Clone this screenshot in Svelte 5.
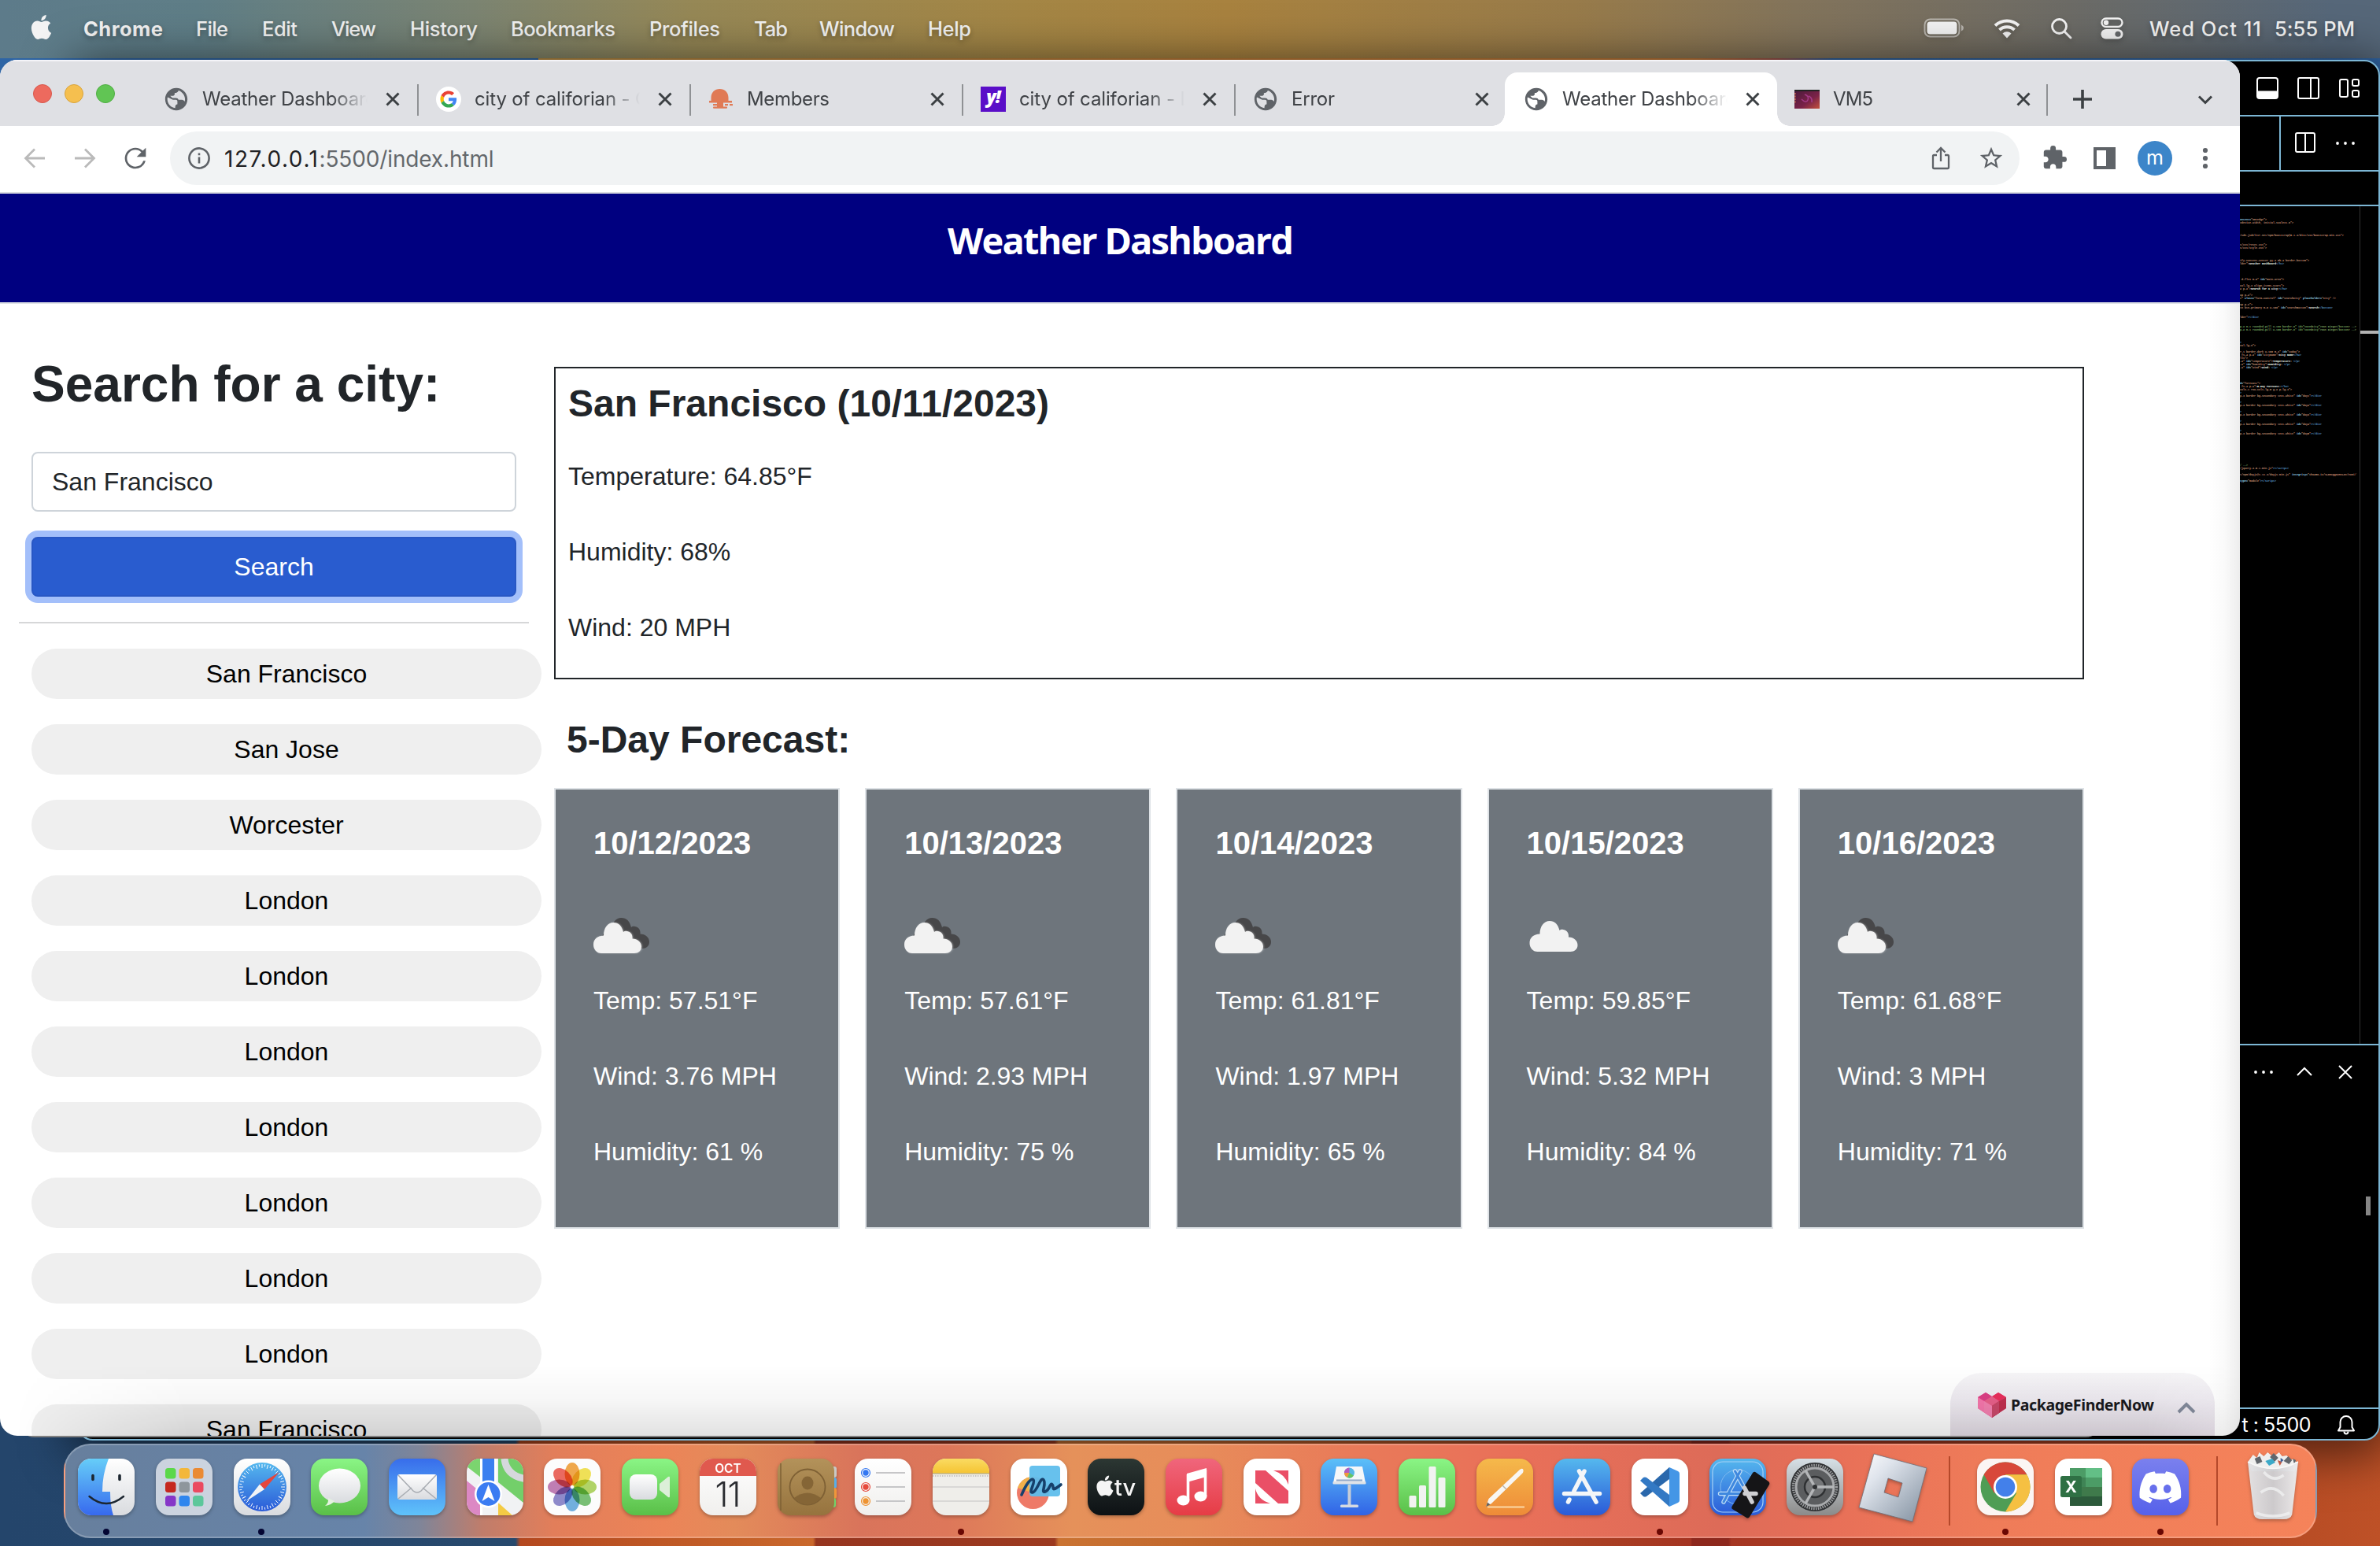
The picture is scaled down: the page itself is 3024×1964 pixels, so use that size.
<script>
  // Spreads letter spacing so that a label takes a given width in pixels.
  function fit(node, width) {
    const natural = node.getBoundingClientRect().width;
    const count = Math.max(1, node.textContent.length - 1);
    node.style.letterSpacing = `${(width - natural) / count}px`;
  }

  const menu = [
    ['Chrome', 143, 101], ['File', 84, 41], ['Edit', 88, 45], ['View', 100, 57], ['History', 128, 86],
    ['Bookmarks', 176, 133], ['Profiles', 133, 90], ['Tab', 83, 43], ['Window', 138, 96], ['Help', 80, 55]
  ];

  const tabs = [
    { icon: 'globe', title: 'Weather Dashboard', width: 222 },
    { icon: 'google', title: 'city of califorian - G', width: 222 },
    { icon: 'members', title: 'Members', width: 105 },
    { icon: 'yahoo', title: 'city of califorian - L', width: 218 },
    { icon: 'globe', title: 'Error', width: 55, last: true },
    { icon: 'globe', title: 'Weather Dashboard', width: 222, active: true },
    { icon: 'vm', title: 'VM5', width: 51, narrow: true }
  ];

  const cities = ['San Francisco', 'San Jose', 'Worcester', 'London', 'London', 'London', 'London', 'London', 'London', 'London', 'San Francisco'];

  const days = [
    { date: '10/12/2023', broken: true, temp: '57.51', wind: '3.76', humidity: 61 },
    { date: '10/13/2023', broken: true, temp: '57.61', wind: '2.93', humidity: 75 },
    { date: '10/14/2023', broken: true, temp: '61.81', wind: '1.97', humidity: 65 },
    { date: '10/15/2023', broken: false, temp: '59.85', wind: '5.32', humidity: 84 },
    { date: '10/16/2023', broken: true, temp: '61.68', wind: '3', humidity: 71 }
  ];

  // Minimap rows: line number -> [token kind, text] pairs.
  const dayRow = (n) => [['s', 'p-3 border bg-secondary text-white"'], ['a', ' id='], ['s', `"day${n}"`], ['g', '></div>']];
  const saved = [['c', 'p-2 m-1 rounded-pill w-100 border-0" id="savedCity">San Diego</button> -->']];
  const rows = {
    0: [['a', 'ontent='], ['s', '"IE=edge">']],
    1: [['s', '=device-width, initial-scale=1.0">']],
    5: [['s', '/cdn.jsdelivr.net/npm/bootstrap@5.1.3/dist/css/bootstrap.min.css">']],
    8: [['s', 's/css/reset.css">']],
    9: [['s', 's/css/style.css">']],
    13: [['s', 'ify-content-center py-3 mb-4 border-bottom">']],
    14: [['s', 'lder">'], ['t', 'Weather Dashboard'], ['g', '</h1>']],
    19: [['s', ' d-flex m-0"'], ['a', ' id='], ['s', '"main-area">']],
    21: [['s', 'col-lg-3 align-items-start">']],
    22: [['s', '2 p-2">'], ['t', 'Search for a city:'], ['g', '</h2>']],
    24: [['s', 'up p-2">']],
    25: [['s', 't"'], ['a', ' class='], ['s', '"form-control"'], ['a', ' id='], ['s', '"searchCity"'], ['a', ' placeholder='], ['s', '"City" />']],
    27: [['s', 'up p-2">']],
    28: [['s', 'tn btn-primary m-0 w-100"'], ['a', ' id='], ['s', '"searchButton">'], ['t', 'Search'], ['g', '</button>']],
    31: [['s', 'lder"'], ['g', '></div>']],
    34: saved,
    35: saved,
    39: [['g', '>']],
    40: [['s', 'col-lg-9">']],
    42: [['s', 'r-1 border-dark w-100 m-3"'], ['a', ' id='], ['s', '"today">']],
    43: [['s', ' fs-4 p-2"'], ['a', ' id='], ['s', '"cityName">'], ['t', 'City Name'], ['g', '</h2>']],
    44: [['s', 'lls">']],
    45: [['s', '-2"'], ['a', ' id='], ['s', '"temperature">'], ['t', 'Temperature: '], ['g', '</p>']],
    46: [['s', '-2"'], ['a', ' id='], ['s', '"humidity">'], ['t', 'Humidity: '], ['g', '</p>']],
    47: [['s', '-2"'], ['a', ' id='], ['s', '"wind">'], ['t', 'Wind: '], ['g', '</p>']],
    52: [['a', 'd='], ['s', '"forecast">']],
    53: [['s', ' fs-4 p-2">'], ['t', '5-Day Forecast:'], ['g', '</h2>']],
    54: [['s', 'cols-1 row-cols-lg-5 g-2 p-lg-3">']],
    55: [['g', '>']],
    56: dayRow(1), 58: [['g', '>']],
    59: dayRow(2), 61: [['g', '>']],
    62: dayRow(3), 64: [['g', '>']],
    65: dayRow(4), 67: [['g', '>']],
    68: dayRow(5),
    78: [['c', '/ -->']],
    79: [['s', '/jquery-3.5.1.min.js"'], ['g', '><\/script>']],
    81: [['s', 't/npm/dayjs@1.11.3/dayjs.min.js"'], ['a', ' integrity='], ['s', '"sha256-iu/sLO8cQgI2HXLZX/eo8i/']],
    83: [['a', 'type='], ['s', '"module"'], ['g', '><\/script>']]
  };
  const code = Array.from({ length: 84 }, (_, i) => rows[i] ?? []);

  const launch = ['#5bd84a', '#f3b73a', '#ea8a34', '#c5281f', '#8e969c', '#ea4a60', '#8636c8', '#2f86ee', '#5cc79b'];
  const petals = ['#f09a2e', '#f0de3a', '#a4cf4c', '#63b75e', '#5aa3dc', '#7d78c4', '#b768a8', '#ea5145'];
  const ticks = Array.from({ length: 48 }, (_, i) => i * 7.5);
</script>

{#snippet cloud(x, y)}
  <path
    transform="translate({x} {y})"
    d="M10 39C4 39 0 34 0 28C0 21 5 17 13 16.500C13 7 18 0 25.500 0C32 0 36 4 38 12C39.500 10.500 41 10.500 43 11C48 12 50 16 49.500 20.500C56 20.500 61 25 61 30.500C61 36 57 39 52 39Z"
  />
{/snippet}

{#snippet x(size)}
  <svg class="close" width={size} height={size} viewBox="0 0 20 20"><path d="M2.500 2.500L17.500 17.500M17.500 2.500L2.500 17.500" /></svg>
{/snippet}

<svg class="defs" width="0" height="0">
  <defs>
    <linearGradient id="finder" x2="0" y2="1"><stop stop-color="#66cdf8" /><stop offset="1" stop-color="#3769ee" /></linearGradient>
    <linearGradient id="white" x2="0" y2="1"><stop stop-color="#fff" /><stop offset="1" stop-color="#d9dbdf" /></linearGradient>
    <linearGradient id="paper" x2="0" y2="1"><stop stop-color="#fff" /><stop offset="1" stop-color="#f0efed" /></linearGradient>
    <linearGradient id="green" x2="0" y2="1"><stop stop-color="#8af585" /><stop offset="1" stop-color="#5abf48" /></linearGradient>
    <linearGradient id="mail" x2="0" y2="1"><stop stop-color="#386deb" /><stop offset="1" stop-color="#5fc3fa" /></linearGradient>
    <linearGradient id="blue" x2="0" y2="1"><stop stop-color="#5bc0f8" /><stop offset="1" stop-color="#3163e6" /></linearGradient>
    <linearGradient id="store" x2="0" y2="1"><stop stop-color="#55b8ee" /><stop offset="1" stop-color="#2a5ad8" /></linearGradient>
    <linearGradient id="red" x2="0" y2="1"><stop stop-color="#f0667c" /><stop offset="1" stop-color="#e63c45" /></linearGradient>
    <linearGradient id="orange" x2="0" y2="1"><stop stop-color="#f5b94b" /><stop offset="1" stop-color="#ee8b38" /></linearGradient>
    <linearGradient id="yellow" x2="0" y2="1"><stop stop-color="#fadb62" /><stop offset="1" stop-color="#f5c433" /></linearGradient>
    <linearGradient id="dark" x2="0" y2="1"><stop stop-color="#2c3733" /><stop offset="1" stop-color="#0d1114" /></linearGradient>
    <linearGradient id="brown" x2="0" y2="1"><stop stop-color="#b3925a" /><stop offset="1" stop-color="#96733e" /></linearGradient>
    <linearGradient id="gear" x2="0" y2="1"><stop stop-color="#d6e0e6" /><stop offset="1" stop-color="#8b8b8a" /></linearGradient>
    <linearGradient id="steel" x2="1" y2="1"><stop stop-color="#fff" /><stop offset=".3" stop-color="#dfe4ec" /><stop offset="1" stop-color="#7e8d9d" /></linearGradient>
    <linearGradient id="discord" x2="0" y2="1"><stop stop-color="#7a80ee" /><stop offset="1" stop-color="#5661ea" /></linearGradient>
    <linearGradient id="bin" x2="1" y2="0"><stop stop-color="#e4e4e6" /><stop offset=".5" stop-color="#cdcdd0" /><stop offset="1" stop-color="#ececee" /></linearGradient>
    <linearGradient id="vm" x2="1" y2="1"><stop stop-color="#4a1a3c" /><stop offset=".6" stop-color="#7a2248" /><stop offset="1" stop-color="#c4503c" /></linearGradient>
    <clipPath id="tile"><rect width="72" height="72" rx="17" /></clipPath>
  </defs>
</svg>

<div class="screen">
  <header class="menubar">
    <svg class="apple" width="31" height="31" viewBox="0 0 24 24"><path fill="#f4f4f4" d="M12.152 6.896c-.948 0-2.415-1.078-3.960-1.040-2.040.027-3.910 1.183-4.961 3.014-2.117 3.675-.546 9.103 1.519 12.090 1.013 1.454 2.208 3.090 3.792 3.039 1.520-.065 2.090-.987 3.935-.987 1.831 0 2.350.987 3.960.948 1.637-.026 2.676-1.480 3.676-2.948 1.156-1.688 1.636-3.325 1.662-3.415-.039-.013-3.182-1.221-3.220-4.857-.026-3.040 2.480-4.494 2.597-4.559-1.429-2.090-3.623-2.324-4.390-2.376-2-.156-3.675 1.090-4.610 1.090zM15.530 3.830c.843-1.012 1.400-2.427 1.245-3.830-1.207.052-2.662.805-3.532 1.818-.780.896-1.454 2.338-1.273 3.714 1.338.104 2.715-.688 3.559-1.701" /></svg>
    <nav>
      {#each menu as [label, slot, width], i}
        <div class="item" class:bold={i === 0} style:width="{slot}px"><span use:fit={width}>{label}</span></div>
      {/each}
    </nav>
    <div class="status">
      <svg width="52" height="26" viewBox="0 0 52 26"><rect x="1.500" y="1.500" width="44" height="22" rx="7" fill="none" stroke="#fff" stroke-opacity=".5" stroke-width="2" /><rect x="4.500" y="4.500" width="38" height="16" rx="4" fill="#f4f4f4" /><path d="M48 8.500q3 1.500 3 4t-3 4z" fill="#fff" fill-opacity=".5" /></svg>
      <svg width="34" height="26" viewBox="0 0 34 26"><g fill="none" stroke="#f4f4f4" stroke-width="4"><path d="M2 9.500a21.500 21.500 0 0 1 30 0" /><path d="M7.500 15a13.600 13.600 0 0 1 19 0" /></g><path d="M11.500 19.500a8 8 0 0 1 11 0L17 25.500z" fill="#f4f4f4" /></svg>
      <svg width="28" height="28" viewBox="0 0 28 28"><g fill="none" stroke="#f4f4f4" stroke-width="2.800" stroke-linecap="round"><circle cx="11.500" cy="11.500" r="9" /><path d="M18 18l8 8" /></g></svg>
      <svg width="30" height="28" viewBox="0 0 30 28"><rect x="1.500" y="1.500" width="26" height="10.500" rx="5.250" fill="none" stroke="#f4f4f4" stroke-width="2.400" /><circle cx="7" cy="6.750" r="3.200" fill="#f4f4f4" /><rect x=".5" y="15" width="28" height="12.500" rx="6.250" fill="#f4f4f4" /><circle cx="22" cy="21.250" r="3.600" fill="#66696b" /></svg>
      <span class="day" use:fit={142}>Wed Oct 11</span>
      <span use:fit={102}>5:55 PM</span>
    </div>
  </header>

  <!-- editor window behind the browser -->
  <section class="editor">
    <div class="ed-title">
      <svg width="30" height="30" viewBox="0 0 30 30"><rect x="2" y="2" width="26" height="26" rx="3" fill="none" stroke="#fff" stroke-width="2" /><path d="M2 18.500h26V27l-1 1H3l-1-1z" fill="#fff" /></svg>
      <svg width="30" height="30" viewBox="0 0 30 30"><rect x="2" y="2" width="26" height="26" rx="2" fill="none" stroke="#fff" stroke-width="2" /><path d="M18 2v26" stroke="#fff" stroke-width="2" /></svg>
      <svg width="30" height="30" viewBox="0 0 30 30"><g fill="none" stroke="#fff" stroke-width="2"><rect x="3" y="4" width="10" height="22" rx="2" /><rect x="19" y="4" width="8" height="8" rx="2" /><rect x="19" y="18" width="8" height="8" rx="2" /></g></svg>
    </div>
    <div class="ed-tabs">
      <svg width="28" height="28" viewBox="0 0 28 28"><rect x="2" y="2" width="24" height="24" rx="2" fill="none" stroke="#fff" stroke-width="2" /><path d="M14 2v24" stroke="#fff" stroke-width="2" /></svg>
      <svg width="26" height="28" viewBox="0 0 26 28"><g fill="#fff"><circle cx="3" cy="15" r="1.900" /><circle cx="13" cy="15" r="1.900" /><circle cx="23" cy="15" r="1.900" /></g></svg>
    </div>
    <div class="ed-crumbs"></div>
    <div class="ed-body">
      <div class="minimap">
        {#each code as line}
          <div class="row">{#each line as [kind, text]}<span class={kind}>{text}</span>{/each}</div>
        {/each}
      </div>
      <div class="ruler"><div class="mark"></div></div>
    </div>
    <div class="ed-panel">
      <div class="panel-icons">
        <svg width="26" height="26" viewBox="0 0 26 26"><g fill="#fff"><circle cx="3" cy="13" r="1.900" /><circle cx="13" cy="13" r="1.900" /><circle cx="23" cy="13" r="1.900" /></g></svg>
        <svg width="26" height="26" viewBox="0 0 26 26"><path d="M4 17l9-9 9 9" fill="none" stroke="#fff" stroke-width="2" /></svg>
        <svg width="26" height="26" viewBox="0 0 26 26"><path d="M5 5l16 16M21 5L5 21" stroke="#fff" stroke-width="2" /></svg>
      </div>
      <div class="thumb"></div>
    </div>
    <div class="ed-status">
      <span use:fit={88}>t : 5500</span>
      <svg width="26" height="28" viewBox="0 0 26 28"><path d="M3 21.500L5.500 17v-6.500a7.500 7.500 0 0 1 15 0V17l2.500 4.500z" fill="none" stroke="#fff" stroke-width="2" stroke-linejoin="round" /><path d="M10.500 22.500q0 3 2.500 3t2.500-3" fill="none" stroke="#fff" stroke-width="2" /></svg>
    </div>
  </section>
  <div class="backdrop"></div>

  <!-- browser window -->
  <section class="browser">
    <div class="strip">
      <div class="lights"><i class="stop"></i><i class="hide"></i><i class="zoom"></i></div>
      {#each tabs as tab}
        <div class="tab" class:active={tab.active} class:last={tab.last} class:narrow={tab.narrow}>
          <div class="fav">
            {#if tab.icon === 'globe'}
              <svg width="34" height="34" viewBox="0 0 24 24"><path fill="#5f6368" d="M12 2C6.480 2 2 6.480 2 12s4.480 10 10 10 10-4.480 10-10S17.520 2 12 2zm-1 17.930c-3.950-.49-7-3.850-7-7.930 0-.62.08-1.210.21-1.790L9 12.500h2.500c1.500 0 1.500 1 1.500 2v2c-1 0-2 .5-2 3.430zM14 12.500c-.55-1-1-1.500-2.500-1.500H8.500l-2-2h2c1 0 2-.5 2-1.500V6.500c1.500 0 3-.5 3.500-2.300 3 .9 5.800 4 5.800 7.800 0 .8-.1 1.500-.3 2.200-.5-.9-1.200-1.700-2.500-1.700z" /></svg>
            {:else if tab.icon === 'google'}
              <svg width="32" height="32" viewBox="-16 -16 80 80"><circle cx="24" cy="24" r="40" fill="#fff" /><g transform="translate(-2.400 -2.400) scale(1.100)"><path fill="#EA4335" d="M24 9.500c3.540 0 6.710 1.220 9.210 3.600l6.850-6.850C35.900 2.380 30.470 0 24 0 14.620 0 6.510 5.380 2.560 13.220l7.980 6.190C12.430 13.720 17.740 9.500 24 9.500z" /><path fill="#4285F4" d="M46.980 24.550c0-1.570-.15-3.090-.38-4.550H24v9.020h12.940c-.58 2.960-2.260 5.480-4.780 7.180l7.730 6c4.510-4.180 7.090-10.360 7.090-17.650z" /><path fill="#FBBC05" d="M10.530 28.590c-.48-1.450-.76-2.990-.76-4.590s.27-3.140.76-4.590l-7.980-6.190C.92 16.460 0 20.120 0 24c0 3.880.92 7.540 2.560 10.780l7.970-6.190z" /><path fill="#34A853" d="M24 48c6.480 0 11.930-2.130 15.890-5.810l-7.730-6c-2.150 1.450-4.920 2.300-8.160 2.300-6.260 0-11.570-4.220-13.470-9.910l-7.980 6.190C6.510 42.620 14.620 48 24 48z" /></g></svg>
            {:else if tab.icon === 'members'}
              <svg width="32" height="32" viewBox="0 0 32 32"><g fill="#e07a55"><path d="M3.500 18V14C3.500 7.500 8 3 14.500 3S25.500 7.500 25.500 14v4H30v2H1v-2z" /><rect x="1" y="18" width="29" height="2.500" /><rect x="11" y="20" width="8" height="7" /><rect x="6" y="22" width="11" height="2.200" /><rect x="21" y="22" width="4" height="2.200" /><rect x="27" y="22" width="4" height="2.200" /><rect x="6" y="25.500" width="18" height="2.300" rx="1" /></g></svg>
            {:else if tab.icon === 'yahoo'}
              <div class="yahoo">y!</div>
            {:else}
              <svg width="32" height="24" viewBox="0 0 32 24"><rect width="32" height="24" fill="url(#vm)" /><path d="M0 1h32" stroke="#222" stroke-width="2" /><path d="M13 6q6 2 4 7t-8-1M18 8q5 2 4 8" fill="none" stroke="#a33a86" stroke-width="1.600" /><path d="M1 4v13" stroke="#c96a4a" stroke-width="1.400" stroke-dasharray="2 1.500" /></svg>
            {/if}
          </div>
          <div class="title"><span use:fit={tab.width}>{tab.title}</span></div>
          {@render x(20)}
        </div>
      {/each}
      <svg class="plus" width="28" height="28" viewBox="0 0 28 28"><path d="M14 2v24M2 14h24" stroke="#3c4043" stroke-width="3.600" /></svg>
      <svg class="down" width="20" height="14" viewBox="0 0 20 14"><path d="M2 2.500l8 8 8-8" fill="none" stroke="#3c4043" stroke-width="3" /></svg>
    </div>

    <div class="toolbar">
      <svg width="32" height="32" viewBox="0 0 32 32"><path d="M29 16H5M16 4.500L4.500 16 16 27.500" fill="none" stroke="#bababa" stroke-width="2.800" /></svg>
      <svg width="32" height="32" viewBox="0 0 32 32"><path d="M3 16h24M16 4.500L27.500 16 16 27.500" fill="none" stroke="#bababa" stroke-width="2.800" /></svg>
      <svg width="40" height="40" viewBox="0 0 24 24" class="reload"><path fill="#5f6368" d="M17.650 6.350A7.958 7.958 0 0 0 12 4a8 8 0 1 0 7.730 10h-1.650A6.400 6.400 0 0 1 12 18.400c-3.530 0-6.400-2.870-6.400-6.400s2.870-6.400 6.400-6.400c1.800 0 3.400.75 4.500 1.900L13 11h7V4z" /></svg>
      <div class="omnibox">
        <svg width="30" height="30" viewBox="0 0 30 30"><circle cx="15" cy="15" r="12.600" fill="none" stroke="#5f6368" stroke-width="2.600" /><path d="M15 13.500v8M15 8.500v2.800" stroke="#5f6368" stroke-width="2.600" /></svg>
        <div class="url"><span use:fit={119}>127.0.0.1</span><span class="dim" use:fit={222}>:5500/index.html</span></div>
        <svg width="32" height="32" viewBox="0 0 32 32"><path d="M11 12H7.500a1.500 1.500 0 0 0-1.500 1.500v14A1.500 1.500 0 0 0 7.500 29h17a1.500 1.500 0 0 0 1.500-1.500v-14a1.500 1.500 0 0 0-1.500-1.500H21M16 20V4M10.500 8.500L16 3l5.500 5.500" fill="none" stroke="#5f6368" stroke-width="2.300" /></svg>
        <svg width="34" height="34" viewBox="0 0 24 24"><path fill="#5f6368" d="M22 9.240l-7.190-.62L12 2 9.190 8.630 2 9.240l5.460 4.730L5.820 21 12 17.270 18.180 21l-1.630-7.030L22 9.240zM12 15.400l-3.760 2.270 1-4.280-3.320-2.880 4.380-.38L12 6.100l1.710 4.040 4.380.38-3.320 2.880 1 4.280L12 15.400z" /></svg>
      </div>
      <svg width="32" height="32" viewBox="0 1 23 23"><path fill="#5f6368" d="M20.500 11H19V7c0-1.100-.9-2-2-2h-4V3.500a2.500 2.500 0 0 0-5 0V5H4c-1.100 0-1.990.9-1.990 2v3.800H3.500c1.490 0 2.700 1.210 2.700 2.700s-1.210 2.700-2.700 2.700H2V20c0 1.100.9 2 2 2h3.800v-1.500c0-1.490 1.210-2.700 2.700-2.700 1.490 0 2.700 1.210 2.700 2.700V22H17c1.100 0 2-.9 2-2v-4h1.500a2.500 2.500 0 0 0 0-5z" /></svg>
      <svg width="32" height="32" viewBox="0 0 32 32"><path fill="#5f6368" fill-rule="evenodd" d="M2 2h28v28H2zM6 6v20h12V6z" /></svg>
      <div class="avatar">m</div>
      <svg width="32" height="32" viewBox="0 0 32 32"><g fill="#5f6368"><circle cx="16" cy="6" r="3.100" /><circle cx="16" cy="16" r="3.100" /><circle cx="16" cy="26" r="3.100" /></g></svg>
    </div>

    <div class="banner"><h1 use:fit={440}>Weather Dashboard</h1></div>

    <div class="page">
      <aside>
        <h2>Search for a city:</h2>
        <div class="input">San Francisco</div>
        <div class="button">Search</div>
        <div class="rule"></div>
        <div class="cities">
          {#each cities as city}<div class="pill">{city}</div>{/each}
        </div>
      </aside>
      <main>
        <div class="today">
          <h3>San Francisco (10/11/2023)</h3>
          <p>Temperature: 64.85°F</p>
          <p>Humidity: 68%</p>
          <p>Wind: 20 MPH</p>
        </div>
        <h3 class="heading">5-Day Forecast:</h3>
        <div class="cards">
          {#each days as day}
            <article>
              <h4>{day.date}</h4>
              <svg class="sky" width="100" height="152" viewBox="0 0 100 152">
                {#if day.broken}
                  <g fill="#474749">{@render cloud(10, 71)}</g>
                  <g class="front" fill="#f2f2f2">{@render cloud(0, 77)}</g>
                {:else}
                  <g fill="#f2f2f2">{@render cloud(3.500, 75)}</g>
                {/if}
              </svg>
              <p>Temp: {day.temp}°F</p>
              <p>Wind: {day.wind} MPH</p>
              <p>Humidity: {day.humidity} %</p>
            </article>
          {/each}
        </div>
      </main>
    </div>

    <div class="finder-tab">
      <svg width="38" height="32" viewBox="0 0 38 32"><path d="M1 6L11 0l8 5 8-5 10 6v14L19 32 1 20z" fill="#ee5f8f" /><path d="M1 6L11 0l8 5-10 6z" fill="#dc3f86" /><path d="M19 5l8-5 10 6-9 5z" fill="#ea2f5c" /><path d="M9 11l10-6 9 6-9 6z" fill="#e8608a" /><path d="M1 6l8 5 10 6v15L1 20z" fill="#f577ac" /><path d="M9 11l10 6v15L9 25z" fill="#f28cb4" opacity=".5" /><path d="M37 6l-9 5-9 6v15l18-12z" fill="#c0304f" /><path d="M28 11l-9 6v15l9-6z" fill="#c9486a" /></svg>
      <span use:fit={182}>PackageFinderNow</span>
      <svg class="up" width="24" height="15" viewBox="0 0 24 15"><path d="M2 13L12 3l10 10" fill="none" stroke="#838a9b" stroke-width="4" /></svg>
    </div>
    <div class="shade side"></div>
    <div class="shade foot"></div>
  </section>

  <footer class="dock">
    <div class="app on"><svg viewBox="0 0 72 72"><g clip-path="url(#tile)"><rect width="72" height="72" fill="url(#white)" /><path d="M0 0H39Q31 20 31 42H41Q41 60 45 72H0z" fill="url(#finder)" /></g><g fill="none" stroke="#1c2630" stroke-width="2.400" stroke-linecap="round"><path d="M14.500 48Q36 66 58 48" /><path d="M19 21.500v5M53 21.500v5" stroke-width="3.600" /></g></svg></div>
    <div class="app"><svg viewBox="0 0 72 72"><rect width="72" height="72" rx="17" fill="#cbd3df" />{#each launch as fill, i}<rect x={12 + (i % 3) * 17.5} y={12 + Math.floor(i / 3) * 17.5} width="13.500" height="13.500" rx="3.500" {fill} />{/each}</svg></div>
    <div class="app on"><svg viewBox="0 0 72 72"><rect width="72" height="72" rx="17" fill="url(#white)" /><circle cx="36" cy="36" r="31" fill="url(#store)" />{#each ticks as angle, i}<path d="M36 7v{i % 2 ? 3 : 5}" stroke="#fff" stroke-width=".9" transform="rotate({angle} 36 36)" />{/each}<path d="M58 17L33 32.500 39 39z" fill="#e5463d" /><path d="M16 54L33 32.500 39 39z" fill="#f2f4f6" /></svg></div>
    <div class="app"><svg viewBox="0 0 72 72"><rect width="72" height="72" rx="17" fill="url(#green)" /><ellipse cx="36.500" cy="34.500" rx="26.500" ry="22" fill="url(#white)" /><path d="M22 50q1 6-4 10 8-1 12-6z" fill="#e4f3e0" /></svg></div>
    <div class="app"><svg viewBox="0 0 72 72"><rect width="72" height="72" rx="17" fill="url(#mail)" /><rect x="11" y="20" width="50" height="32" rx="3" fill="url(#white)" /><path d="M12 21L31 41q5 4 10 0L60 21M12 51l17-14M60 51L43 37" fill="none" stroke="#a9adb3" stroke-width="1.600" /></svg></div>
    <div class="app"><svg viewBox="0 0 72 72"><g clip-path="url(#tile)"><rect width="72" height="72" fill="#f1f2f4" /><path d="M0 0h18v24L0 10z" fill="#7bd46f" /><path d="M0 28l17 14v30H0z" fill="#dc88c4" /><path d="M40 0h32v56L40 30z" fill="#73cf6a" /><path d="M40 56l18 16H40z" fill="#f4cb45" /><path d="M48 0q2 22 28 26" fill="none" stroke="#d6d8dc" stroke-width="9" /><rect x="20" width="15" height="36" fill="#3b7ff0" /><rect x="17" width="3" height="72" fill="#fff" /><rect x="35" width="3" height="30" fill="#fff" /></g><circle cx="27.500" cy="45" r="17.500" fill="#fff" /><circle cx="27.500" cy="45" r="15" fill="#3b7cf2" /><path d="M27.500 33l8 21-8-5-8 5z" fill="#fff" /></svg></div>
    <div class="app"><svg viewBox="0 0 72 72"><rect width="72" height="72" rx="17" fill="#fcfcfc" />{#each petals as fill, i}<ellipse class="petal" cx="36" cy="19.500" rx="9.500" ry="14.500" {fill} opacity=".85" transform="rotate({i * 45} 36 36)" />{/each}</svg></div>
    <div class="app"><svg viewBox="0 0 72 72"><rect width="72" height="72" rx="17" fill="url(#green)" /><rect x="10" y="20" width="35" height="32" rx="8" fill="url(#white)" /><path d="M48 32l11-9q2-1 2 1v24q0 2-2 1l-11-9z" fill="#dcefd8" /></svg></div>
    <div class="app"><svg viewBox="0 0 72 72"><g clip-path="url(#tile)"><rect width="72" height="72" fill="url(#paper)" /><rect width="72" height="22" fill="#e0594e" /></g><text x="36" y="17.500" class="oct">OCT</text><text x="35.500" y="61" class="eleven">11</text></svg></div>
    <div class="app"><svg viewBox="0 0 72 72"><rect x="62" y="10" width="13" height="14" rx="3" fill="#c9c9c6" /><rect x="62" y="24" width="13" height="14" rx="3" fill="#58aee8" /><rect x="62" y="37" width="13" height="14" rx="3" fill="#f0963a" /><rect x="62" y="50" width="12" height="12" rx="3" fill="#72d368" /><rect width="72" height="72" rx="16" fill="url(#brown)" /><path d="M4 6v60" stroke="#7e6034" stroke-width="1.500" /><g fill="#856536"><circle cx="38" cy="36" r="22.500" fill="none" stroke="#7e6034" stroke-width="1.800" /><ellipse cx="38" cy="31" rx="7.500" ry="8.500" /><path d="M21 50q17-13 34 0-17 17-34 0z" /></g></svg></div>
    <div class="app"><svg viewBox="0 0 72 72"><rect width="72" height="72" rx="17" fill="url(#paper)" />{#each ['#3478f2', '#e64a3d', '#ee9332'] as fill, i}<circle cx="14" cy={18 + i * 18} r="5.500" fill="none" stroke={fill} stroke-width="1.200" /><circle cx="14" cy={18 + i * 18} r="3.700" {fill} /><path d="M27 {18 + i * 18}h37" stroke="#c6c6c8" stroke-width="1.800" />{/each}</svg></div>
    <div class="app on"><svg viewBox="0 0 72 72"><g clip-path="url(#tile)"><rect width="72" height="72" fill="#efeeea" /><rect width="72" height="18.500" fill="url(#yellow)" /><path d="M0 19h72" stroke="#a89450" stroke-width="1" /><path d="M0 22h72" stroke="#bdbbb6" stroke-width="1.600" stroke-dasharray="1.500 1.500" /><path d="M0 36h72M0 54h72" stroke="#d2d1cf" stroke-width="1.400" /></g></svg></div>
    <div class="app"><svg viewBox="0 0 72 72"><rect width="72" height="72" rx="17" fill="#fff" /><circle cx="28.500" cy="43.500" r="20.500" fill="#ee7a68" /><path d="M9 37a20.500 20.500 0 0 1 17-14v20z" fill="#f2b04a" /><rect x="24" y="9" width="39" height="39" rx="4" fill="#5dbdec" opacity=".94" /><path d="M14 46C20 32 26 24 29 27S22 44 28 43 38 22 42 27 38 44 44 42 50 30 53 33 50 44 64 33" fill="none" stroke="#16406b" stroke-width="3.600" stroke-linecap="round" /></svg></div>
    <div class="app"><svg viewBox="0 0 72 72"><rect width="72" height="72" rx="17" fill="url(#dark)" /><path transform="translate(9 21.500) scale(1.080)" fill="#f5f5f5" d="M12.152 6.896c-.948 0-2.415-1.078-3.960-1.040-2.040.027-3.910 1.183-4.961 3.014-2.117 3.675-.546 9.103 1.519 12.090 1.013 1.454 2.208 3.090 3.792 3.039 1.520-.065 2.090-.987 3.935-.987 1.831 0 2.350.987 3.960.948 1.637-.026 2.676-1.480 3.676-2.948 1.156-1.688 1.636-3.325 1.662-3.415-.039-.013-3.182-1.221-3.220-4.857-.026-3.040 2.480-4.494 2.597-4.559-1.429-2.090-3.623-2.324-4.390-2.376-2-.156-3.675 1.090-4.610 1.090zM15.530 3.830c.843-1.012 1.400-2.427 1.245-3.830-1.207.052-2.662.805-3.532 1.818-.78.896-1.454 2.338-1.273 3.714 1.338.104 2.715-.688 3.559-1.701" /><text x="47.500" y="47" class="tv">tv</text></svg></div>
    <div class="app"><svg viewBox="0 0 72 72"><rect width="72" height="72" rx="17" fill="url(#red)" /><path d="M27 19l25-7v11l-25 7z" fill="#fff" /><path d="M28.500 20v32M50.500 14v34" stroke="#fff" stroke-width="3.600" /><ellipse cx="22.500" cy="53" rx="8" ry="6.500" fill="#fff" /><ellipse cx="44.500" cy="48" rx="8" ry="6.500" fill="#fff" /></svg></div>
    <div class="app"><svg viewBox="0 0 72 72"><rect width="72" height="72" rx="17" fill="#fff" /><path d="M15 15h13l29 26v16H44L15 31z" fill="#ea4f66" /><path d="M38 15h19v18Q53 20 38 15zM15 38v19h19Q18 52 15 38z" fill="#ea4f66" /></svg></div>
    <div class="app"><svg viewBox="0 0 72 72"><rect width="72" height="72" rx="17" fill="url(#blue)" /><path d="M20 10h33l4 21H16z" fill="#f5f7f9" /><rect x="15.500" y="29" width="42" height="3.500" rx="1" fill="#dfe3e8" /><path d="M20 27.500h33" stroke="#8fa8c8" stroke-width="2" /><circle cx="36.500" cy="18" r="6.500" fill="#58b7e6" /><path d="M36.500 18v-6.500a6.500 6.500 0 0 0-6.500 6.500z" fill="#b45cc0" /><path d="M36.500 18H30a6.500 6.500 0 0 0 4 6z" fill="#f09a3a" /><path d="M36.500 18l-2.500 6a6.500 6.500 0 0 0 8-2.500z" fill="#63c466" /><rect x="34.500" y="33" width="4" height="26" fill="#c6cdd8" /><rect x="25" y="58.500" width="23" height="3.500" rx="1.500" fill="#d5dae2" /></svg></div>
    <div class="app"><svg viewBox="0 0 72 72"><rect width="72" height="72" rx="17" fill="url(#green)" /><g fill="#f1f3f1"><rect x="13.500" y="47" width="9" height="15" rx="1.500" /><rect x="26" y="34" width="9" height="28" rx="1.500" /><rect x="38.500" y="10" width="9" height="52" rx="1.500" /><rect x="50.500" y="24" width="9" height="38" rx="1.500" /></g></svg></div>
    <div class="app"><svg viewBox="0 0 72 72"><rect width="72" height="72" rx="17" fill="url(#orange)" /><path d="M12 61l3.500-10L55 14q4-2.500 4.500.5T57 20L19 57z" fill="#f8f6f2" /><path d="M33 34l5 5" stroke="#b9b3aa" stroke-width="1.500" /><path d="M12 61l2-5.500 3.500 3z" fill="#66605a" /><path d="M14 61.500h47" stroke="#fbd8a6" stroke-width="1.800" /></svg></div>
    <div class="app"><svg viewBox="0 0 72 72"><rect width="72" height="72" rx="17" fill="url(#store)" /><g stroke="#f4f6f8" stroke-width="5.500" stroke-linecap="round"><path d="M39 16L26 41M20 52l-1.500 3M32.500 16L54 55M13.500 44.500h45" /></g></svg></div>
    <div class="app on"><svg viewBox="0 0 72 72"><rect width="72" height="72" rx="17" fill="#fff" /><path d="M48 11L11 44l4 4q2 1 4 0L48 26z" fill="#2a68ac" /><path d="M48 61L11 28l4-4q2-1 4 0l29 22z" fill="#3379c4" /><path d="M48 11l11 5q2 1 2 3v34q0 2-2 3l-11 5z" fill="#4496e6" /></svg></div>
    <div class="app"><svg viewBox="0 0 72 72"><rect width="72" height="72" rx="17" fill="url(#store)" /><rect x="4" y="4" width="64" height="64" rx="13" fill="none" stroke="#a6d1f5" stroke-width="1.200" /><circle cx="36" cy="36" r="22" fill="none" stroke="#7fb9ee" stroke-width="1" /><g stroke="#bcdcf7" stroke-width="5.500" stroke-linecap="round"><path d="M39 16L18 55M32.500 16L54 55M13.500 44.500h45" /></g><g stroke="#3f88de" stroke-width="3" stroke-linecap="round"><path d="M39 16L18 55M32.500 16L54 55M13.500 44.500h45" /></g><path d="M55 18q2-2 4-.5L75 29q2 1.500 1 4L51 74q-2 2.500-4 1L29 64q-1.500-1.500 0-4z" fill="#151517" /><path d="M44.500 37L54 55M45 44.500h14" stroke="#cfcfd2" stroke-width="5.500" stroke-linecap="round" /></svg></div>
    <div class="app"><svg viewBox="0 0 72 72"><rect width="72" height="72" rx="17" fill="url(#gear)" /><circle cx="36" cy="36" r="31" fill="#2f3133" /><circle cx="36" cy="36" r="27.500" fill="none" stroke="#9a9c9e" stroke-width="3.500" stroke-dasharray="1.600 1.300" /><circle cx="36" cy="36" r="24" fill="#5b5d5f" stroke="#a9abad" stroke-width="3" /><circle cx="36" cy="36" r="13" fill="#747678" stroke="#2f3133" stroke-width="2.500" /><path d="M36 36h24M36 36L24 15M36 36L24 57" stroke="#b4b6b8" stroke-width="3.500" /><circle cx="36" cy="36" r="3" fill="#2f3133" /></svg></div>
    <div class="app big"><svg viewBox="0 0 88 88"><path fill="url(#steel)" fill-rule="evenodd" stroke="#6c6f78" stroke-width=".8" d="M20 1L87 19 69 87 1 69zM38 32L33 50l18 6 5-18z" /></svg></div>
    <div class="sep"></div>
    <div class="app on"><svg viewBox="0 0 72 72"><rect width="72" height="72" rx="17" fill="#fbf5f3" /><circle cx="36" cy="36" r="31.500" fill="#4f9d55" /><path d="M8.700 20.200A31.500 31.500 0 0 1 63.300 20.200H36L22 44z" fill="#d8483a" /><path d="M63.300 20.200A31.500 31.500 0 0 1 36 67.500L50 44 36 20.200z" fill="#f5c042" /><circle cx="36" cy="36" r="15" fill="#fff" /><circle cx="36" cy="36" r="12.300" fill="#4380ea" /></svg></div>
    <div class="app"><svg viewBox="0 0 72 72"><rect width="72" height="72" rx="17" fill="#fff" /><g><rect x="19" y="12" width="41" height="48" rx="2" fill="#3f7a4b" /><rect x="19" y="12" width="20" height="12" fill="#4c9c66" /><rect x="39" y="12" width="21" height="12" fill="#63bf86" /><rect x="19" y="24" width="20" height="12" fill="#3f8455" /><rect x="39" y="24" width="21" height="12" fill="#4c9c66" /><rect x="19" y="48" width="41" height="12" fill="#2c5a3b" /></g><rect x="7" y="22" width="27" height="27" rx="2.500" fill="#2f7044" /><text x="20.500" y="43" class="excel">X</text></svg></div>
    <div class="app on"><svg viewBox="0 0 72 72"><rect width="72" height="72" rx="17" fill="url(#discord)" /><path transform="translate(9.500 10) scale(2.200)" fill="#fff" d="M20.317 4.370a19.791 19.791 0 00-4.885-1.515.074.074 0 00-.079.037c-.211.375-.445.865-.608 1.250-1.845-.276-3.680-.276-5.487 0-.164-.393-.406-.874-.618-1.250a.077.077 0 00-.079-.037 19.736 19.736 0 00-4.885 1.515.070.070 0 00-.032.028C.533 9.046-.319 13.580.099 18.058a.082.082 0 00.031.056c2.053 1.508 4.041 2.423 5.993 3.029a.078.078 0 00.084-.028c.462-.630.873-1.295 1.226-1.994a.076.076 0 00-.042-.106c-.653-.248-1.274-.550-1.872-.892a.077.077 0 01-.008-.128c.126-.094.252-.192.372-.291a.074.074 0 01.078-.011c3.928 1.793 8.180 1.793 12.061 0a.074.074 0 01.079.010c.120.099.246.198.373.292a.077.077 0 01-.007.128 12.299 12.299 0 01-1.873.891.077.077 0 00-.041.107c.360.698.772 1.363 1.225 1.993a.076.076 0 00.084.029c1.961-.607 3.950-1.522 6.002-3.029a.077.077 0 00.031-.055c.500-5.177-.838-9.674-3.549-13.660a.061.061 0 00-.031-.029zM8.020 15.331c-1.183 0-2.157-1.086-2.157-2.419 0-1.333.956-2.419 2.157-2.419 1.211 0 2.176 1.095 2.157 2.419 0 1.333-.956 2.419-2.157 2.419zm7.975 0c-1.183 0-2.157-1.086-2.157-2.419 0-1.333.955-2.419 2.157-2.419 1.211 0 2.176 1.095 2.157 2.419 0 1.333-.946 2.419-2.157 2.419z" /></svg></div>
    <div class="sep"></div>
    <div class="app big"><svg class="trash" viewBox="0 0 88 88"><path d="M12 12l6-8 5 4 3-7 6 5 5-5 5 4 6-1 4-3 4 5 6-1 5 5 4 0 5 5-4 10H16z" fill="#efefee" /><path d="M20 9l7-3 3 7-7 3zM40 7l5-5 6 6-5 5zM58 12l6-6 5 5-4 5zM70 9l4 2-2 6z" fill="#62676d" /><path d="M34 12l9-3 4 5-8 4z" fill="#3ba9c8" /><path d="M50 11l6 2-3 5z" fill="#c45a42" /><path d="M54 8l4 3-4 3z" fill="#3b5f96" /><path d="M11 13Q44 30 77 13L69 80Q67 86 58 86H30Q21 86 19 80z" fill="url(#bin)" opacity=".97" /><path d="M11 13Q44 30 77 13" fill="none" stroke="#f8f8f8" stroke-width="1.500" /><path d="M32 26q12 14 26 4M28 52q16-12 30 4M22 78q22 8 44 0" fill="none" stroke="#f0f0f1" stroke-width="3.500" opacity=".8" /></svg></div>
  </footer>
</div>

<style>
  :global(body) { margin: 0; }
  * { box-sizing: border-box; }
  .defs { position: absolute; }
  svg { display: block; flex: none; }
  h1, h2, h3, h4, p { margin: 0; }
  span { white-space: nowrap; }

  .screen {
    position: relative;
    width: 3024px;
    height: 1964px;
    overflow: hidden;
    font-family: Inter, 'Liberation Sans', sans-serif;
    background:
      linear-gradient(90deg, #2e65a5 684px, #b88a40 684px, #c07c38 1500px, #bf7535 2150px, #99504a 2260px, #2b5f9c 2330px, #3166a5) 0 0 / 100% 140px no-repeat,
      linear-gradient(90deg, #24456b 0, #27496d 655px, #b4481f 661px, #c9682c 1033px, #96351f 1037px, #9c3a20 1340px, #ca7332 1345px, #b45527 1800px, #a43421 2148px, #8d281d 2150px, #8d281d 2196px, #a53622 2200px, #b14722 2800px, #be5127) 0 0 / 100% 100%;
  }

  /* menu bar */
  .menubar {
    display: flex;
    align-items: center;
    height: 74px;
    padding: 0 32px 2px 37px;
    color: #f4f4f4;
    font-size: 25.500px;
    font-weight: 500;
    text-shadow: 0 3px 6px rgba(0, 0, 0, .3);
    background: linear-gradient(90deg, #5d7b8a 0, #5f7e87 250px, #7b8472 600px, #968856 880px, #a48645 1300px, #a8823f 1560px, #987b4a 2000px, #83745b 2280px, #6c6b66 2630px, #566779 2960px);
  }
  .apple { margin-right: 38px; margin-bottom: 3px; }
  nav { display: flex; }
  .item.bold { font-weight: 700; }
  .status { display: flex; align-items: center; margin-left: auto; }
  .status svg { filter: drop-shadow(0 3px 3px rgba(0, 0, 0, .2)); }
  .status svg:nth-of-type(1) { margin-right: 37px; }
  .status svg:nth-of-type(2) { margin-right: 38px; }
  .status svg:nth-of-type(3) { margin-right: 36px; }
  .status svg:nth-of-type(4) { margin-right: 32px; }
  .day { margin-right: 16px; }

  /* editor */
  .editor {
    position: absolute;
    left: 98px;
    top: 76px;
    width: 2926px;
    height: 1754px;
    display: flex;
    flex-direction: column;
    background: #000;
    border: 2px solid #7cb6d4;
    border-radius: 20px;
    box-shadow: 0 10px 60px 10px rgba(0, 0, 0, .55);
    overflow: hidden;
  }
  .ed-title, .ed-tabs, .ed-crumbs { display: flex; align-items: center; justify-content: flex-end; border-bottom: 2px solid #7cb6d4; flex: none; }
  .ed-title { height: 70px; gap: 22px; padding-right: 22px; }
  .ed-tabs { height: 70px; gap: 24px; padding: 0 29px 2px 18px; align-self: flex-end; border-left: 2px solid #7cb6d4; width: 126px; }
  .ed-crumbs { height: 46px; border-top: 2px solid #7cb6d4; margin-top: -2px; }
  .ed-body { height: 1066px; flex: none; display: flex; justify-content: flex-end; border-bottom: 2px solid #7cb6d4; }
  .minimap { width: 152px; padding-top: 15px; overflow: hidden; font: 700 3.333px/4px 'Liberation Mono', monospace; }
  .row { height: 4px; white-space: pre; }
  .row span { white-space: pre; }
  .s { color: #c88e74; }
  .a { color: #9cd0ec; }
  .t { color: #fff; }
  .g { color: #5a96ca; }
  .c { color: #7ba662; }
  .ruler { width: 24px; border-left: 1px solid #333; padding-top: 158px; }
  .mark { height: 4px; background: #b2b2b2; }
  .ed-panel { flex: 1; padding: 21px 29px 0 0; }
  .panel-icons { display: flex; justify-content: flex-end; gap: 26px; }
  .thumb { width: 6px; height: 24px; margin: 145px -19px 0 auto; background: #868686; }
  .ed-status { height: 40px; flex: none; display: flex; align-items: center; justify-content: flex-end; gap: 32px; padding: 2px 28px 0 0; border-top: 2px solid #7cb6d4; color: #fff; font-size: 25px; }
  .backdrop { position: absolute; left: 24px; top: 90px; width: 2646px; height: 1736px; border-radius: 20px; background: #808080; }

  /* browser */
  .browser {
    position: absolute;
    left: 0;
    top: 76px;
    width: 2846px;
    height: 1748px;
    background: #fff;
    border-radius: 22px;
    overflow: hidden;
  }
  .strip { display: flex; height: 84px; background: #dfe0e4; border-top: 2px solid #f4f4f8; }
  .lights { display: flex; gap: 16px; width: 186px; padding: 29px 0 0 42px; flex: none; }
  .lights i { width: 24px; height: 24px; border-radius: 50%; }
  .stop { background: #ed6a5e; border: 1px solid #d8574c; }
  .hide { background: #f5bf4f; border: 1px solid #d9a43c; }
  .zoom { background: #61c554; border: 1px solid #4fae43; }
  .tab { position: relative; display: flex; align-items: center; width: 346px; flex: none; padding: 14px 0 0 22px; }
  .tab::after { content: ''; position: absolute; right: 0; top: 29px; width: 2px; height: 40px; background: #8f9194; }
  .tab.last::after { display: none; }
  .tab.narrow { width: 344px; }
  .fav { width: 32px; flex: none; margin-right: 17px; display: flex; justify-content: center; }
  .title { width: 210px; flex: none; margin-right: 22px; overflow: hidden; font-size: 24px; line-height: 34px; color: #3f4246; mask-image: linear-gradient(90deg, #000 164px, transparent 210px); }
  .tab.active { margin: 14px 0 0 -4px; padding: 0 0 0 24px; background: #fff; border-radius: 16px 16px 0 0; }
  .tab.active::before, .tab.active::after { content: ''; display: block; position: absolute; top: auto; bottom: 0; width: 16px; height: 16px; background: radial-gradient(circle at 0 0, transparent 15.500px, #fff 16px); }
  .tab.active::before { left: -16px; }
  .tab.active::after { left: 100%; right: auto; background: radial-gradient(circle at 100% 0, transparent 15.500px, #fff 16px); }
  .close path { stroke: #3c4043; stroke-width: 2.900; }
  .yahoo { width: 32px; height: 32px; background: #5a0ec8; color: #fff; font: italic 800 23px/25px 'Open Sans', sans-serif; letter-spacing: -1px; text-align: center; }
  .plus { margin: 34px 0 0 30px; }
  .down { margin: 42px 0 0 132px; }

  .toolbar { display: flex; align-items: center; height: 86px; padding: 0 0 2px 28px; border-bottom: 2px solid #dadce0; background: #fff; }
  .toolbar > svg { margin-right: 32px; }
  .toolbar > .reload { margin: 0 24px 0 -4px; }
  .toolbar > svg:last-child { margin-right: 0; }
  .omnibox { display: flex; align-items: center; width: 2350px; height: 68px; flex: none; margin-right: 28px; padding: 0 19px 0 22px; border-radius: 34px; background: #f1f3f4; }
  .url { flex: 1; margin-left: 17px; padding-top: 2px; font-size: 28px; color: #202124; }
  .dim { color: #64686c; }
  .omnibox svg:nth-of-type(2) { margin-right: 31px; }
  .avatar { width: 44px; height: 44px; flex: none; margin: 0 26px 0 -6px; border-radius: 50%; background: #3c85c9; color: #fff; font-size: 25px; line-height: 43px; text-align: center; }

  .banner { display: flex; justify-content: center; height: 140px; background: #000080; border-bottom: 2px solid #dee2e6; }
  h1 { align-self: flex-start; margin-top: 25px; color: #fff; font: 700 47px/68px 'Open Sans', sans-serif; white-space: nowrap; }

  .page { display: grid; grid-template-columns: 704px 1944px; font-family: 'Liberation Sans', sans-serif; font-size: 32px; line-height: 48px; color: #212529; }
  aside { padding: 64px 16px 0 24px; }
  h2 { margin: 0 0 47px 16px; font-size: 64px; line-height: 77px; white-space: nowrap; }
  .input, .button { width: 616px; height: 76px; margin-left: 16px; border-radius: 8px; }
  .input { padding: 12px 24px; border: 2px solid #ced4da; }
  .button { margin-top: 32px; padding-top: 13px; background: #295ccf; border: 2px solid #2857c4; color: #fff; text-align: center; box-shadow: 0 0 0 8px #a3bffa; line-height: 46px; }
  .rule { width: 648px; height: 2px; margin: 32px 0; background: #d6d7d8; }
  .cities { display: grid; gap: 32px; margin-left: 16px; height: 1000px; }
  .pill { width: 648px; height: 64px; border-radius: 32px; background: #efefef; color: #000; line-height: 64px; text-align: center; }
  main { padding-top: 80px; }
  .today { height: 397px; padding: 16px 16px; border: 2px solid #212529; }
  h3 { font-size: 48px; line-height: 58px; }
  .today h3 { margin-bottom: 39px; }
  .today p { margin-bottom: 48px; }
  .heading { margin: 48px 0 32px 16px; }
  .cards { display: grid; grid-template-columns: repeat(5, 1fr); gap: 32px; }
  article { height: 560px; padding: 44px 0 0 48px; background: #6e757c; border: 2px solid #dee2e6; color: #fff; }
  h4 { font-size: 40px; line-height: 48px; }
  article p { margin-bottom: 48px; }
  .front { filter: drop-shadow(1px 0 1px rgba(255, 255, 255, .35)); }

  .shade { position: absolute; pointer-events: none; }
  .side { top: 310px; right: 0; bottom: 0; width: 40px; background: linear-gradient(90deg, transparent, rgba(0, 0, 0, .02) 50%, rgba(0, 0, 0, .07)); }
  .foot { left: 0; right: 0; bottom: 0; height: 90px; background: linear-gradient(transparent, rgba(0, 0, 0, .035) 50%, rgba(0, 0, 0, .115)); mask-image: linear-gradient(90deg, transparent 20px, #000 240px, #000 calc(100% - 120px), rgba(0, 0, 0, .4)); }
  .finder-tab {
    position: absolute;
    left: 2478px;
    bottom: 0;
    width: 336px;
    height: 80px;
    display: flex;
    align-items: center;
    padding: 2px 24px 0 34px;
    border-radius: 40px 40px 0 0;
    background: linear-gradient(#f6f5f7, #eeeaf1 50%, #e6dfe8);
    color: #1a1a1e;
    font: 700 19.500px/30px 'Noto Sans', 'Open Sans', sans-serif;
  }
  .finder-tab span { margin-left: 5px; }
  .up { margin: 6px 0 0 auto; }

  /* dock */
  .dock {
    position: absolute;
    left: 81px;
    top: 1834px;
    width: 2863px;
    height: 120px;
    display: flex;
    align-items: flex-start;
    padding: 17px 0 0 3px;
    border: 2px solid rgba(255, 255, 255, .22);
    border-radius: 34px;
    background: linear-gradient(90deg, #677f9d 0, #6784a9 380px, #7f8599 450px, #c07d6b 530px, #e27e5a 620px, #ec8458 760px, #e38b5a 850px, #d9745b 1010px, #dd775a 1120px, #e5915a 1280px, #e78d5a 1430px, #e97a59 1640px, #e97059 1840px, #dd6b58 2100px, #e87058 2250px, #ef7c59 2450px, #f5835a 2863px);
  }
  .app { position: relative; width: 98.700px; flex: none; display: flex; justify-content: center; }
  .app svg { width: 72px; height: 72px; overflow: visible; filter: drop-shadow(0 2px 2px rgba(0, 0, 0, .28)); }
  .app.big svg { width: 88px; height: 88px; margin-top: -7px; }
  .app svg.trash { margin-top: -9px; transform: scaleX(.97); }
  .petal { mix-blend-mode: multiply; }
  .app.on::after { content: ''; position: absolute; left: 45px; top: 89px; width: 8px; height: 8px; border-radius: 50%; background: #6a0803; }
  .app.on:nth-child(-n + 4)::after { background: #030533; }
  .sep { width: 2px; height: 88px; margin: -3px 21px 0; flex: none; background: #b5492b; }
  .oct { font: 600 15.500px Inter, sans-serif; fill: #fff; text-anchor: middle; }
  .eleven { font: 300 43px Inter, sans-serif; fill: #2a2c30; text-anchor: middle; letter-spacing: -1px; }
  .tv { font: 500 29px Inter, sans-serif; fill: #f5f5f5; text-anchor: middle; }
  .excel { font: 700 20px Inter, sans-serif; fill: #fff; text-anchor: middle; }
</style>
